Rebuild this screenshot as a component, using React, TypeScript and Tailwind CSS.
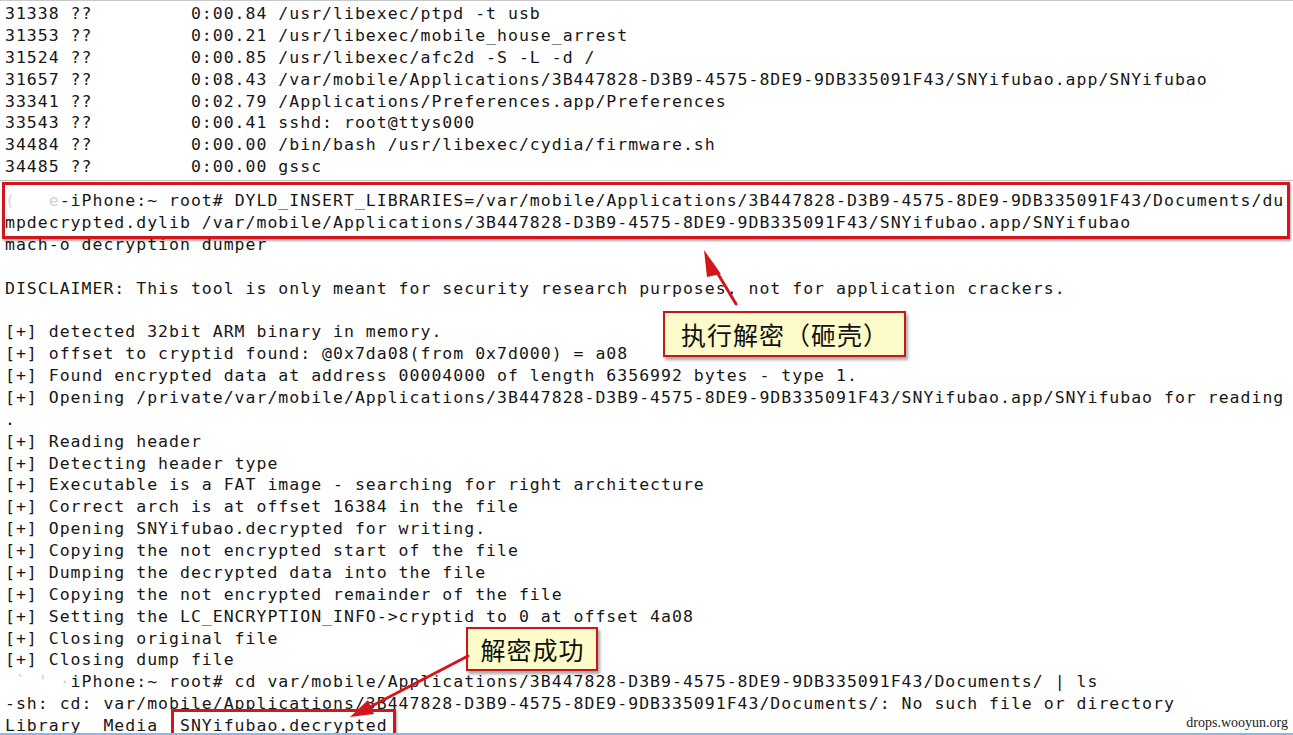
import React from "react";

const UUID = "3B447828-D3B9-4575-8DE9-9DB335091F43";

const block1: string[] = [
  "31338 ??         0:00.84 /usr/libexec/ptpd -t usb",
  "31353 ??         0:00.21 /usr/libexec/mobile_house_arrest",
  "31524 ??         0:00.85 /usr/libexec/afc2d -S -L -d /",
  `31657 ??         0:08.43 /var/mobile/Applications/${UUID}/SNYifubao.app/SNYifubao`,
  "33341 ??         0:02.79 /Applications/Preferences.app/Preferences",
  "33543 ??         0:00.41 sshd: root@ttys000",
  "34484 ??         0:00.00 /bin/bash /usr/libexec/cydia/firmware.sh",
  "34485 ??         0:00.00 gssc",
];

const block2: React.ReactNode[] = [
  <>
    <span className="text-[#d8d8d8]">(</span>
    {"   "}
    <span className="text-[#d4d4d4]">e</span>
    {`-iPhone:~ root# DYLD_INSERT_LIBRARIES=/var/mobile/Applications/${UUID}/Documents/du`}
  </>,
  `mpdecrypted.dylib /var/mobile/Applications/${UUID}/SNYifubao.app/SNYifubao`,
  "mach-o decryption dumper",
  "",
  "DISCLAIMER: This tool is only meant for security research purposes, not for application crackers.",
  "",
  "[+] detected 32bit ARM binary in memory.",
  "[+] offset to cryptid found: @0x7da08(from 0x7d000) = a08",
  "[+] Found encrypted data at address 00004000 of length 6356992 bytes - type 1.",
  `[+] Opening /private/var/mobile/Applications/${UUID}/SNYifubao.app/SNYifubao for reading`,
  ".",
  "[+] Reading header",
  "[+] Detecting header type",
  "[+] Executable is a FAT image - searching for right architecture",
  "[+] Correct arch is at offset 16384 in the file",
  "[+] Opening SNYifubao.decrypted for writing.",
  "[+] Copying the not encrypted start of the file",
  "[+] Dumping the decrypted data into the file",
  "[+] Copying the not encrypted remainder of the file",
  "[+] Setting the LC_ENCRYPTION_INFO->cryptid to 0 at offset 4a08",
  "[+] Closing original file",
  "[+] Closing dump file",
  <>
    <span className="text-[#d0d0d0]">{" ` ' ·"}</span>
    {`iPhone:~ root# cd var/mobile/Applications/${UUID}/Documents/ | ls`}
  </>,
  `-sh: cd: var/mobile/Applications/${UUID}/Documents/: No such file or directory`,
  "Library  Media  SNYifubao.decrypted",
];

function Line({ children }: { children: React.ReactNode }) {
  return (
    <div className="h-[21.875px] whitespace-pre leading-[21.875px]">
      {children === "" ? " " : children}
    </div>
  );
}

function Callout({ text, className }: { text: string; className: string }) {
  return (
    <div
      className={`absolute flex items-center justify-center border-2 border-[#c9161d] bg-[#fdfbc9] pl-[1px] text-[25px] leading-none tracking-[1px] text-[#111] shadow-[2px_3px_3px_rgba(0,0,0,0.35)] ${className}`}
      style={{ fontFamily: '"Noto Sans CJK SC", "Noto Sans", sans-serif' }}
    >
      {text}
    </div>
  );
}

export default function App() {
  return (
    <div
      className="relative h-[735px] w-[1293px] overflow-hidden bg-white text-[16.5px] tracking-[1px] text-[#161616]"
      style={{ fontFamily: '"DejaVu Sans Mono", "Liberation Mono", monospace' }}
    >
      <div className="h-px bg-[#c8c8c8]" />
      <div className="pl-[5px] pt-[2px]">
        {block1.map((l, i) => (
          <Line key={i}>{l}</Line>
        ))}
      </div>
      <div className="mt-[2px] h-px bg-[#bdbdbd]" />
      <div className="mt-[9px] pl-[5px]">
        {block2.map((l, i) => (
          <Line key={i}>{l}</Line>
        ))}
      </div>

      {/* annotation boxes */}
      <div className="absolute left-[2px] top-[182px] h-[57px] w-[1288px] border-[3px] border-[#d4161c] shadow-[1px_2px_2px_rgba(0,0,0,0.35)]" />
      <div className="absolute left-[171px] top-[709px] h-[40px] w-[225px] border-[3px] border-[#d4161c] shadow-[1px_2px_2px_rgba(0,0,0,0.35)]" />

      <Callout text="执行解密（砸壳）" className="left-[663px] top-[311px] h-[46px] w-[243px]" />
      <Callout text="解密成功" className="left-[466px] top-[627px] h-[44px] w-[132px]" />

      <svg className="pointer-events-none absolute left-0 top-0" width="1293" height="735">
        <line x1="736" y1="304" x2="712" y2="264" stroke="#d4161c" strokeWidth="3" strokeLinecap="round" />
        <polygon points="704,250 721,274 707,277" fill="#d4161c" />
        <line x1="468" y1="656" x2="366" y2="709" stroke="#d4161c" strokeWidth="3" strokeLinecap="round" />
        <polygon points="350,717 368,700 374,714" fill="#d4161c" />
      </svg>

      <div
        className="absolute bottom-[5px] right-[5px] text-[14px] leading-none tracking-normal text-[#222]"
        style={{ fontFamily: '"Liberation Serif", serif' }}
      >
        drops.wooyun.org
      </div>
      <div className="absolute bottom-0 left-0 h-[2px] w-full bg-[#8db7e5]" />
    </div>
  );
}
